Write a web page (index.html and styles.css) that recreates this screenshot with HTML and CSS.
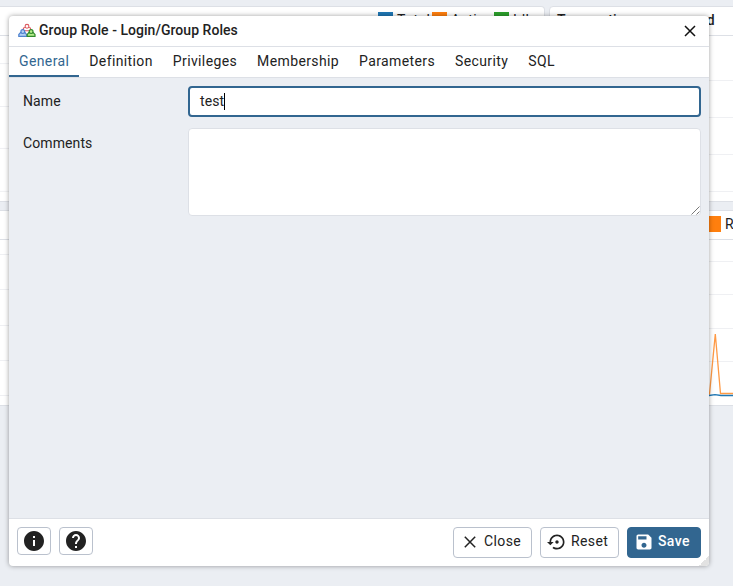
FILE: index.html
```html
<!DOCTYPE html>
<html lang="en">
<head>
<meta charset="utf-8">
<title>Group Role</title>
<link rel="stylesheet" href="styles.css">
</head>
<body>
<main class="dashboard">
  <section class="card">
    <header class="card-head legend">
      <i class="swatch blue"></i><span class="w-total">Total</span>
      <i class="swatch orange"></i><span class="w-active">Active</span>
      <i class="swatch green"></i><span>Idle</span>
    </header>
    <svg class="chart" viewBox="0 0 545 165"><path class="grid" d="M0 27.5H545M0 70.5H545M0 112.5H545M0 155.5H545"/></svg>
  </section>
  <section class="card">
    <header class="card-head title">Transactions per second</header>
    <svg class="chart" viewBox="0 0 183 165"><path class="grid" d="M0 44.5H183M0 81.5H183M0 118.5H183M0 155.5H183"/></svg>
  </section>
  <section class="card wide">
    <header class="card-head legend reads"><i class="swatch orange"></i><span>Reads</span></header>
    <svg class="chart" viewBox="0 0 733 165">
      <path class="grid" d="M0 14.5H360M0 49.5H360M0 85.5H360M0 120.5H360M0 155.5H360M360 21.5H733M360 54.5H733M360 88.5H733M360 121.5H733"/>
      <path class="line orange-line" d="M704 154L709.5 154L715.3 94L720.5 153.5H733"/>
      <path class="line blue-line" d="M704 155.5H709L715 154.7L721 155.5H733"/>
    </svg>
  </section>
</main>

<div class="dialog" role="dialog">
  <header class="dialog-head">
    <svg class="role-icon" viewBox="0 0 18 16">
      <g fill="#fff" stroke="#dc5a60" stroke-width="1.1"><path d="M5.3 7.700V6.200Q5.300 4.500 7 4.500H11Q12.700 4.500 12.700 6.200V7.700Z"/><circle cx="9" cy="3.300" r="1.900"/></g>
      <g fill="#b5d0f4" stroke="#4f83cf" stroke-width="1.2"><path d="M.8 13.300V11.500L2.500 9.700H7.100L8.600 11.500V13.300Z"/><circle cx="4.800" cy="8.600" r="1.900"/></g>
      <g fill="#b6ed8c" stroke="#318b2d" stroke-width="1.2"><path d="M9.200 13.300V11.500L10.800 9.700H15.200L17 11.500V13.300Z"/><circle cx="13.100" cy="8.600" r="1.900"/></g>
    </svg>
    <h1>Group Role - Login/Group Roles</h1>
    <svg class="head-close" viewBox="0 0 12 12"><path d="M1 1L11 11M11 1L1 11"/></svg>
  </header>
  <nav class="tabs">
    <a class="active">General</a><a>Definition</a><a>Privileges</a><a>Membership</a><a>Parameters</a><a>Security</a><a>SQL</a>
  </nav>
  <div class="form">
    <label>Name</label>
    <div class="input">test<i class="caret"></i></div>
    <label>Comments</label>
    <div class="textarea"><svg viewBox="0 0 9 9"><path d="M.5 8.500L8.500 .5M5.500 8.500L8.500 5.500"/></svg></div>
  </div>
  <footer class="dialog-foot">
    <button class="btn icon-btn"><svg viewBox="0 0 24 24"><path d="M12 2C6.480 2 2 6.480 2 12s4.480 10 10 10 10-4.480 10-10S17.520 2 12 2zm1 15h-2v-6h2v6zm0-8h-2V7h2v2z"/></svg></button>
    <button class="btn icon-btn"><svg viewBox="0 0 24 24"><path d="M12 2C6.480 2 2 6.480 2 12s4.480 10 10 10 10-4.480 10-10S17.520 2 12 2zm1 17h-2v-2h2v2zm2.070-7.750-.9.920C13.450 12.900 13 13.500 13 15h-2v-.5c0-1.100.450-2.100 1.170-2.830l1.240-1.260c.370-.360.590-.860.590-1.410 0-1.100-.9-2-2-2s-2 .9-2 2H8c0-2.210 1.790-4 4-4s4 1.790 4 4c0 .880-.360 1.680-.930 2.250z"/></svg></button>
    <span class="spacer"></span>
    <button class="btn close"><svg class="cross" viewBox="0 0 12 12"><path d="M.8 .8L11.200 11.200M11.200 .8L.8 11.200"/></svg>Close</button>
    <button class="btn reset"><svg viewBox="0 0 24 24"><path d="M14 12c0-1.100-.9-2-2-2s-2 .9-2 2 .9 2 2 2 2-.9 2-2zm-2-9c-4.970 0-9 4.030-9 9H0l4 4 4-4H5c0-3.870 3.130-7 7-7s7 3.130 7 7-3.130 7-7 7c-1.510 0-2.910-.490-4.060-1.300l-1.420 1.440C8.040 20.300 9.940 21 12 21c4.970 0 9-4.030 9-9s-4.030-9-9-9z"/></svg>Reset</button>
    <button class="btn save"><svg viewBox="0 0 24 24"><path d="M17 3H5c-1.110 0-2 .9-2 2v14c0 1.100.890 2 2 2h14c1.100 0 2-.9 2-2V7l-4-4zm-5 16c-1.660 0-3-1.340-3-3s1.340-3 3-3 3 1.340 3 3-1.340 3-3 3zm3-10H5V5h10v4z"/></svg>Save</button>
  </footer>
  <i class="resizer"></i>
</div>
</body>
</html>
```
FILE: styles.css
```css
* { box-sizing: border-box; }
body {
  margin: 0;
  height: 586px;
  overflow: hidden;
  position: relative;
  background: #ebeef3;
  color: #222;
  font: 14px/20px Roboto, "Liberation Sans", sans-serif;
  letter-spacing: .38px;
}
h1, label, button { font: inherit; letter-spacing: inherit; margin: 0; }

.dashboard {
  display: grid;
  grid-template-columns: 545px 1fr;
  grid-template-rows: 196px 196px;
  gap: 8px 4px;
  padding-top: 6px;
  margin-right: -4px;
}
.card {
  background: #fff;
  border: 1px solid #dde0e6;
  border-radius: 4px;
  overflow: hidden;
}
.card:first-child, .wide { border-left: 0; border-radius: 0 4px 4px 0; }
.wide { grid-column: 1 / -1; }
.card-head {
  height: 29px;
  border-bottom: 1px solid #dde0e6;
  padding-top: 4px;
  white-space: nowrap;
}
.title { padding: 3px 0 0 7px; font-weight: 500; letter-spacing: .15px; }
.legend { display: flex; padding-left: 378px; }
.legend span { margin-top: -1px; }
.reads { padding-left: 706px; }
.swatch { width: 15px; height: 16px; margin: 1px 4px 0 0; flex: none; }
.blue { background: #1f77b4; }
.orange { background: #ff7f0e; }
.green { background: #2ca02c; }
.w-total { width: 35px; }
.w-active { width: 43px; }
.chart { display: block; width: 100%; height: 165px; }
.wide .chart { width: 733px; }
.grid { stroke: #eff0f3; fill: none; }
.line { fill: none; stroke-width: 1.3; }
.orange-line { stroke: #ff9a45; }
.blue-line { stroke: #1f77b4; }

.dialog {
  position: absolute;
  left: 9px;
  top: 16px;
  width: 700px;
  height: 550px;
  display: flex;
  flex-direction: column;
  background: #fff;
  border-radius: 4px;
  overflow: hidden;
  box-shadow: 0 0 5px rgba(0, 0, 0, .38);
}
.dialog-head {
  height: 31px;
  display: flex;
  align-items: center;
  padding: 0 13px 2px 9px;
  border-bottom: 1px solid #dde0e6;
}
.role-icon { width: 18px; height: 16px; margin: 2px 3px 0 0; }
.dialog-head h1 { font-weight: 500; letter-spacing: .04px; }
.head-close { width: 12px; height: 12px; margin: 1px 0 0 auto; fill: none; stroke: #111; stroke-width: 1.5; }

.tabs { display: flex; height: 31px; border-bottom: 1px solid #dde0e6; }
.tabs a { height: 30px; padding: 4px 10px 0; }
.tabs .active { color: #326690; border-bottom: 2px solid #326690; }

.form {
  flex: 1;
  background: #ebeef3;
  display: grid;
  grid-template-columns: 165px 1fr;
  grid-template-rows: 31px 88px;
  gap: 11px 0;
  padding: 8px 8px 0 14px;
}
.form label { padding-top: 5px; letter-spacing: .1px; }
.input, .textarea { background: #fff; border-radius: 4px; }
.input {
  border: 2px solid #326690;
  padding: 3px 9px 3px 10px;
  display: flex;
  letter-spacing: .1px;
}
.caret { width: 1px; height: 17px; margin-top: 2px; background: #000; }
.textarea {
  border: 1px solid #dde0e6;
  display: flex;
  align-items: flex-end;
  justify-content: flex-end;
}
.textarea svg { width: 9px; height: 9px; fill: none; stroke: #555; stroke-width: .8; }

.dialog-foot {
  height: 48px;
  border-top: 1px solid #dde0e6;
  display: flex;
  align-items: flex-start;
  gap: 8px;
  padding: 8px 8px 0;
}
.spacer { flex: 1; }
.btn {
  height: 31px;
  display: flex;
  align-items: center;
  padding: 0 0 3px 5px;
  background: #fff;
  color: #222;
  border: 1px solid #bac1cd;
  border-radius: 4px;
}
.btn svg { width: 20px; height: 20px; fill: currentColor; margin: 2px 4px 0 0; }
.btn .cross { width: 12px; height: 12px; margin: 2px 8px 0 0; fill: none; stroke: currentColor; stroke-width: 1.5; }
.icon-btn { width: 34px; height: 28px; padding: 0; justify-content: center; }
.btn.icon-btn svg { width: 24px; height: 24px; margin: 0; flex: none; }
.close, .reset { width: 79px; }
.close { padding-left: 10px; }
.reset { padding-left: 6px; }
.save { width: 74px; padding-left: 6px; background: #326690; border-color: #326690; color: #fff; font-weight: 500; }
.resizer {
  position: absolute;
  right: 0;
  bottom: 0;
  width: 10px;
  height: 10px;
  background: linear-gradient(135deg, transparent 50%, #e2e2e2 50%);
}
```
